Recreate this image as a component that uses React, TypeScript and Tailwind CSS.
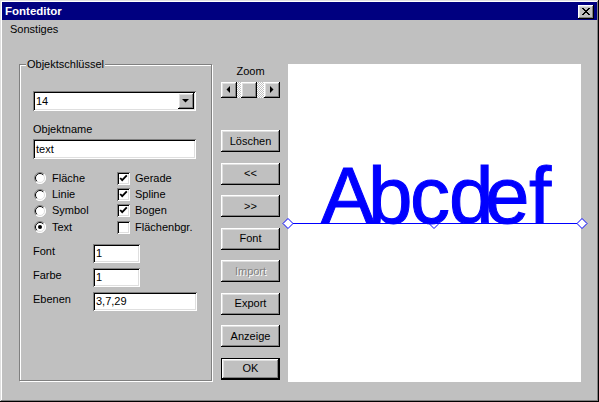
import React from "react";

const raised =
  "shadow-[inset_-1px_-1px_#000,inset_1px_1px_#fff,inset_-2px_-2px_#808080,inset_2px_2px_#dfdfdf]";
const sunken =
  "shadow-[inset_1px_1px_#808080,inset_-1px_-1px_#fff,inset_2px_2px_#000,inset_-2px_-2px_#dfdfdf]";

function Radio({ checked }: { checked?: boolean }) {
  return (
    <svg width="12" height="12" viewBox="0 0 12 12" className="shrink-0">
      <circle cx="6" cy="6" r="5.5" fill="#fff" />
      <path d="M10 2 A5.5 5.5 0 0 1 2 10" stroke="#fff" fill="none" />
      <path d="M2.1 9.9 A5.5 5.5 0 0 1 9.9 2.1" stroke="#808080" fill="none" />
      <path d="M9.2 2.8 A4.5 4.5 0 0 1 2.8 9.2" stroke="#dfdfdf" fill="none" />
      <path d="M2.8 9.2 A4.5 4.5 0 0 1 9.2 2.8" stroke="#000" fill="none" />
      {checked && <circle cx="6" cy="6" r="2" fill="#000" />}
    </svg>
  );
}

function Check({ checked }: { checked?: boolean }) {
  return (
    <div className={`w-[13px] h-[13px] bg-white shrink-0 relative ${sunken}`}>
      {checked && (
        <svg width="13" height="13" viewBox="0 0 13 13" className="absolute left-0 top-0">
          <polyline points="3.2,6 5.2,8.2 9.8,3.4" fill="none" stroke="#000" strokeWidth="1.8" />
        </svg>
      )}
    </div>
  );
}

function Btn({ label, disabled, def }: { label: string; disabled?: boolean; def?: boolean }) {
  const inner = (
    <div
      className={`w-full h-full flex items-center justify-center bg-[#c0c0c0] ${raised} ${
        disabled ? "text-[#808080] [text-shadow:1px_1px_#fff]" : "text-black"
      }`}
    >
      {label}
    </div>
  );
  if (def)
    return <div className="w-[59px] h-[22px] border border-black">{inner}</div>;
  return <div className="w-[59px] h-[22px]">{inner}</div>;
}

function ArrowBtn({ dir }: { dir: "l" | "r" | "d" }) {
  const pts =
    dir === "l" ? "9,4 9,11 5.5,7.5" : dir === "r" ? "6,4 6,11 9.5,7.5" : "4,6 11,6 7.5,9.5";
  return (
    <div className={`w-[16px] h-[16px] bg-[#c0c0c0] shrink-0 relative ${raised}`}>
      <svg width="16" height="16" viewBox="0 0 16 16" className="absolute left-0 top-0">
        <polygon points={pts} fill="#000" />
      </svg>
    </div>
  );
}

function Row({ radio, rchecked, cb, cchecked }: { radio: string; rchecked?: boolean; cb: string; cchecked?: boolean }) {
  return (
    <div className="h-[16.4px] flex items-center">
      <div className="w-[84px] flex items-center pl-[1px]">
        <Radio checked={rchecked} />
        <span className="ml-[6px] leading-[13px]">{radio}</span>
      </div>
      <Check checked={cchecked} />
      <span className="ml-[5px] leading-[13px]">{cb}</span>
    </div>
  );
}

function Field({ label, value, w }: { label: string; value: string; w: string }) {
  return (
    <div className="flex items-start h-[19px]">
      <span className="w-[60px] leading-[13px] pt-[1px]">{label}</span>
      <div className={`${w} h-[19px] bg-white flex items-center pl-[3px] ${sunken}`}>{value}</div>
    </div>
  );
}

export default function App() {
  return (
    <div className="w-[599px] h-[402px] bg-[#c0c0c0] p-[2px] flex flex-col font-['Liberation_Sans',Arial,sans-serif] text-[11px] text-black shadow-[inset_-1px_-1px_#000,inset_1px_1px_#dfdfdf,inset_-2px_-2px_#808080,inset_2px_2px_#fff] select-none overflow-hidden">
      {/* Title bar */}
      <div className="h-[18px] bg-[#000080] flex items-center justify-between pl-[3px] pr-[3px] shrink-0">
        <span className="text-white font-bold text-[11.5px] leading-[14px]">Fonteditor</span>
        <div className={`w-[16px] h-[14px] bg-[#c0c0c0] relative mt-[2px] ${raised}`}>
          <svg width="16" height="14" viewBox="0 0 16 14" className="absolute left-0 top-0" shapeRendering="crispEdges">
            <g fill="#000">
              <rect x="4" y="3" width="2" height="1" />
              <rect x="10" y="3" width="2" height="1" />
              <rect x="5" y="4" width="2" height="1" />
              <rect x="9" y="4" width="2" height="1" />
              <rect x="6" y="5" width="4" height="1" />
              <rect x="7" y="6" width="2" height="1" />
              <rect x="6" y="7" width="4" height="1" />
              <rect x="5" y="8" width="2" height="1" />
              <rect x="9" y="8" width="2" height="1" />
              <rect x="4" y="9" width="2" height="1" />
              <rect x="10" y="9" width="2" height="1" />
            </g>
          </svg>
        </div>
      </div>
      {/* Menu */}
      <div className="h-[18px] flex items-center pl-[8px] shrink-0">
        <span className="leading-[13px]">Sonstiges</span>
      </div>
      {/* Body */}
      <div className="flex items-start">
        {/* Group box */}
        <div className="ml-[17px] mt-[26px] w-[193px] h-[317px] relative border border-[#808080] shadow-[inset_1px_1px_#fff,1px_1px_#fff] pl-[13px] pt-[26px]">
          <span className="absolute -top-[7px] left-[6px] px-[1px] bg-[#c0c0c0] leading-[13px]">Objektschlüssel</span>
          <div className={`w-[163px] h-[20px] bg-white relative flex items-center pl-[3px] ${sunken}`}>
            14
            <div className="absolute right-[2px] top-[2px]">
              <ArrowBtn dir="d" />
            </div>
          </div>
          <div className="mt-[12px] h-[13px] leading-[13px]">Objektname</div>
          <div className={`mt-[3px] w-[163px] h-[20px] bg-white flex items-center pl-[3px] ${sunken}`}>text</div>
          <div className="mt-[11px] flex flex-col">
            <Row radio="Fläche" cb="Gerade" cchecked />
            <Row radio="Linie" cb="Spline" cchecked />
            <Row radio="Symbol" cb="Bogen" cchecked />
            <Row radio="Text" rchecked cb="Flächenbgr." />
          </div>
          <div className="mt-[8.4px] flex flex-col gap-[5px]">
            <Field label="Font" value="1" w="w-[47px]" />
            <Field label="Farbe" value="1" w="w-[47px]" />
            <Field label="Ebenen" value="3,7,29" w="w-[104px]" />
          </div>
        </div>
        {/* Middle column */}
        <div className="ml-[9px] w-[59px] flex flex-col">
          <div className="mt-[27px] h-[13px] leading-[13px] text-center">Zoom</div>
          <div className="mt-[4px] h-[16px] flex">
            <ArrowBtn dir="l" />
            <div className="flex-1 h-[16px] bg-[repeating-conic-gradient(#c0c0c0_0_25%,#ffffff_0_50%)] bg-[length:2px_2px] pl-[4px]">
              <div className={`w-[16px] h-[16px] bg-[#c0c0c0] ${raised}`} />
            </div>
            <ArrowBtn dir="r" />
          </div>
          <div className="mt-[32px] flex flex-col gap-[10.5px]">
            <Btn label="Löschen" />
            <Btn label="<<" />
            <Btn label=">>" />
            <Btn label="Font" />
            <Btn label="Import" disabled />
            <Btn label="Export" />
            <Btn label="Anzeige" />
            <Btn label="OK" def />
          </div>
        </div>
        {/* Canvas */}
        <div className="ml-[8px] mt-[26px] w-[293px] h-[318px] bg-white relative">
          <svg
            width="293"
            height="318"
            viewBox="0 0 293 318"
            className="absolute left-0 top-0 overflow-visible"
          >
            <polygon points="142,160.5 146,156.5 150,160.5 146,164.5" fill="#fff" stroke="#0000ff" strokeWidth="1" />
            <text
              x="33 80 122 161 197 241"
              y="159"
              fontFamily="'Liberation Sans', Arial, sans-serif"
              fontSize="80"
              fill="#0000ff"
              stroke="#0000ff"
              strokeWidth="1"
            >
              Abcdef
            </text>
            <line x1="0" y1="159.5" x2="294" y2="159.5" stroke="#0000ff" strokeWidth="1" />
            <polygon points="-5,159.5 0,154.5 5,159.5 0,164.5" fill="#fff" stroke="#0000ff" strokeWidth="1" />
            <polygon points="289,159.5 294,154.5 299,159.5 294,164.5" fill="#fff" stroke="#0000ff" strokeWidth="1" />
          </svg>
        </div>
      </div>
    </div>
  );
}
